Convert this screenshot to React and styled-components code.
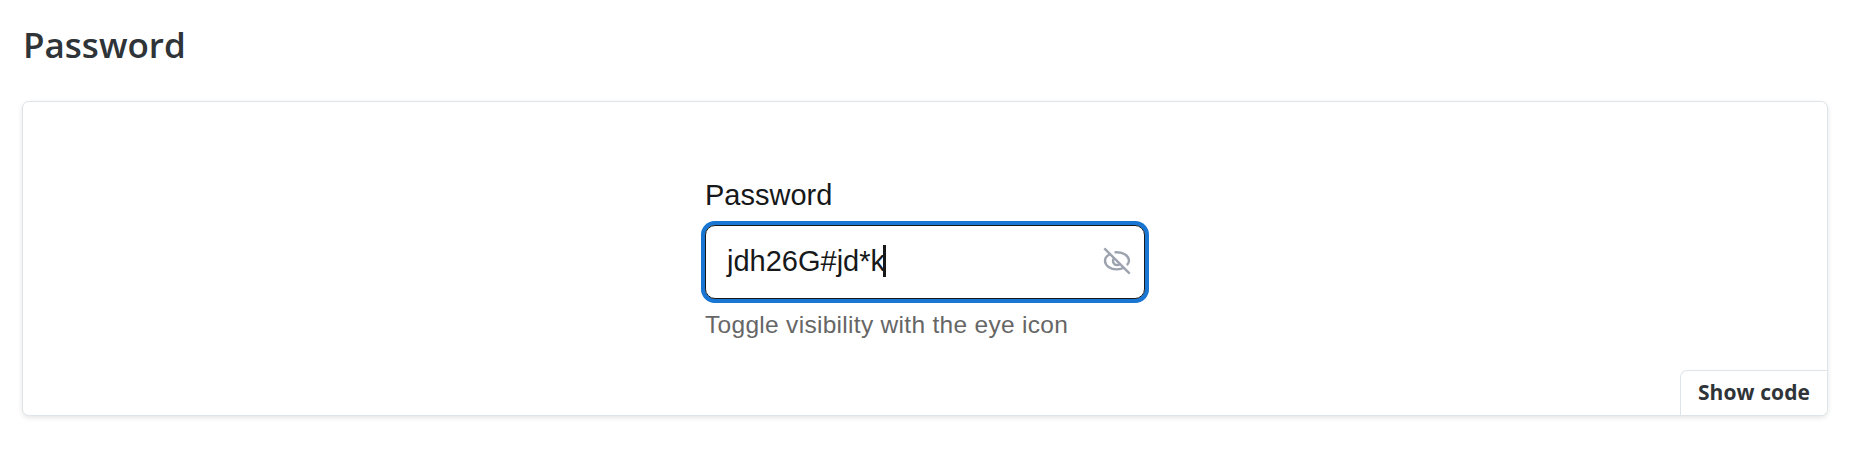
import React from "react";
import styled, { createGlobalStyle } from "styled-components";

const GlobalStyle = createGlobalStyle`
  * { box-sizing: border-box; }
  body { margin: 0; background: #fff; font-family: "Liberation Sans", Arial, sans-serif; }
`;

const Page = styled.main`
  height: 465px;
  padding: 23px 30px 0 22px;
  overflow: hidden;
`;

const Heading = styled.h3`
  margin: 0 0 34px 1px;
  font: 650 35px/44px "Open Sans", sans-serif;
  color: #2e3438;
  white-space: nowrap;
`;

const Preview = styled.section`
  display: flex;
  flex-direction: column;
  align-items: center;
  height: 315px;
  padding-top: 77px;
  border: 1px solid #dee4e8;
  border-radius: 7px;
  background: #fff;
  box-shadow: 0 2px 5px rgba(0, 0, 0, 0.1);
  overflow: hidden;
`;

const Field = styled.div`
  display: flex;
  flex-direction: column;
  width: 440px;
`;

const Label = styled.label`
  height: 32px;
  margin-bottom: 14px;
  font-size: 29px;
  line-height: 32px;
  color: #16181a;
  white-space: nowrap;
`;

const InputBox = styled.div`
  display: flex;
  align-items: center;
  height: 74px;
  padding: 0 13px 2px 21px;
  border: 1px solid #16181a;
  border-radius: 10px;
  box-shadow: 0 0 0 3.5px #1976d2, 0 0 0 4px #1976d2;
  color: #16181a;
`;

const Value = styled.span`
  font-size: 29px;
  line-height: 32px;
  white-space: nowrap;
`;

const Caret = styled.span`
  width: 3px;
  height: 32px;
  margin-left: -2px;
  background: #16181a;
`;

const Toggle = styled.button`
  display: flex;
  margin-left: auto;
  padding: 0;
  border: 0;
  background: none;
  color: #9ca3af;
`;

const Helper = styled.p`
  margin: 11px 0 0;
  font-size: 24.5px;
  line-height: 30px;
  letter-spacing: 0.3px;
  color: #666;
  white-space: nowrap;
`;

const ShowCode = styled.button`
  align-self: flex-end;
  width: 147px;
  height: 45px;
  margin-top: auto;
  padding: 0 0 2px;
  border: solid #dee4e8;
  border-width: 1px 0 0 1px;
  border-radius: 7px 0 0 0;
  background: #fff;
  font: 680 21px/28px "Open Sans", sans-serif;
  letter-spacing: 0.1px;
  color: #2e3438;
  white-space: nowrap;
`;

const EyeOff = () => (
  <svg width="28" height="28" viewBox="0 0 28 28" fill="none" stroke="currentColor" strokeWidth="2.4">
    <path d="M1.3 1.3 26.7 26.7" />
    <path d="M7.4 7C4.1 8.5 2 11 2 13.8c0 4.8 5.4 8.6 12 8.6 2.6 0 5-.6 7-1.6" />
    <path d="M11.5 5.4c.8-.1 1.6-.2 2.5-.2 6.6 0 12 3.9 12 8.6 0 1.6-.8 3-2.1 4.3" />
    <path d="M11.2 11a4 4 0 1 0 5.8 5.8" />
  </svg>
);

export default function App() {
  return (
    <>
      <GlobalStyle />
      <Page>
        <Heading>Password</Heading>
        <Preview>
          <Field>
            <Label>Password</Label>
            <InputBox>
              <Value>jdh26G#jd*k</Value>
              <Caret />
              <Toggle aria-label="Hide password"><EyeOff /></Toggle>
            </InputBox>
            <Helper>Toggle visibility with the eye icon</Helper>
          </Field>
          <ShowCode>Show code</ShowCode>
        </Preview>
      </Page>
    </>
  );
}
